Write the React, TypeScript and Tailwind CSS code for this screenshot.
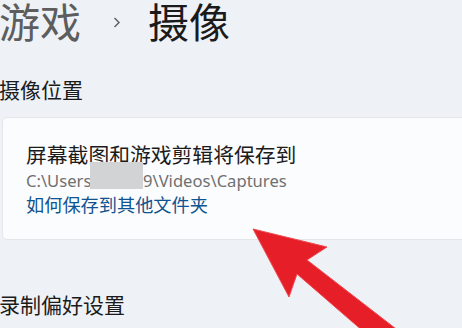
import React from "react";

const font = { fontFamily: '"Noto Sans", "Noto Sans CJK SC", sans-serif' };

export default function App() {
  return (
    <div
      className="relative w-[462px] h-[328px] overflow-hidden bg-[#eef2f7] text-[#1b1b1b]"
      style={font}
    >
      <div className="flex flex-col">
        <div className="flex items-center h-[44px] text-[41px] leading-[44px]">
          <span className="text-[#5d5d5d] -ml-[1px]">游戏</span>
          <svg className="ml-[32px] mr-[27px]" width="8" height="11" viewBox="0 0 8 11">
            <path d="M1.5 1 L6 5.5 L1.5 10" fill="none" stroke="#5d5d5d" strokeWidth="1.4" />
          </svg>
          <span className="text-[#1b1b1b]">摄像</span>
        </div>
        <div className="mt-[32px] text-[21px] leading-[28px] -ml-[1px]">摄像位置</div>
        <div className="mt-[13px] ml-[2px] -mr-[10px] h-[123px] rounded-[5px] border border-[#e3e6ea] bg-[#fbfcfd] pl-[23px] pt-[24px]">
          <div className="text-[20.8px] leading-[26px] text-[#1b1b1b]">屏幕截图和游戏剪辑将保存到</div>
          <div className="relative h-[26px] text-[16.6px] leading-[26px] text-[#707070]">
            <span>C:\Users</span>
            <div className="absolute left-[64px] top-[-6px] w-[53px] h-[27px] bg-[#d2d3d5]" />
            <span className="absolute left-[117px] top-0 whitespace-nowrap">9\Videos\Captures</span>
          </div>
          <div className="text-[18.2px] leading-[22px] text-[#0f5390]">如何保存到其他文件夹</div>
        </div>
        <div className="mt-[51px] text-[21px] leading-[28px] -ml-[1px]">录制偏好设置</div>
      </div>
      <svg className="absolute inset-0" width="462" height="328" viewBox="0 0 462 328">
        <polygon
          points="253,229 327,247 307,260 400,332 364,332 297,274 289,297"
          fill="#e61e28"
          stroke="#f04a4f"
          strokeWidth="1"
          strokeLinejoin="round"
        />
      </svg>
    </div>
  );
}
